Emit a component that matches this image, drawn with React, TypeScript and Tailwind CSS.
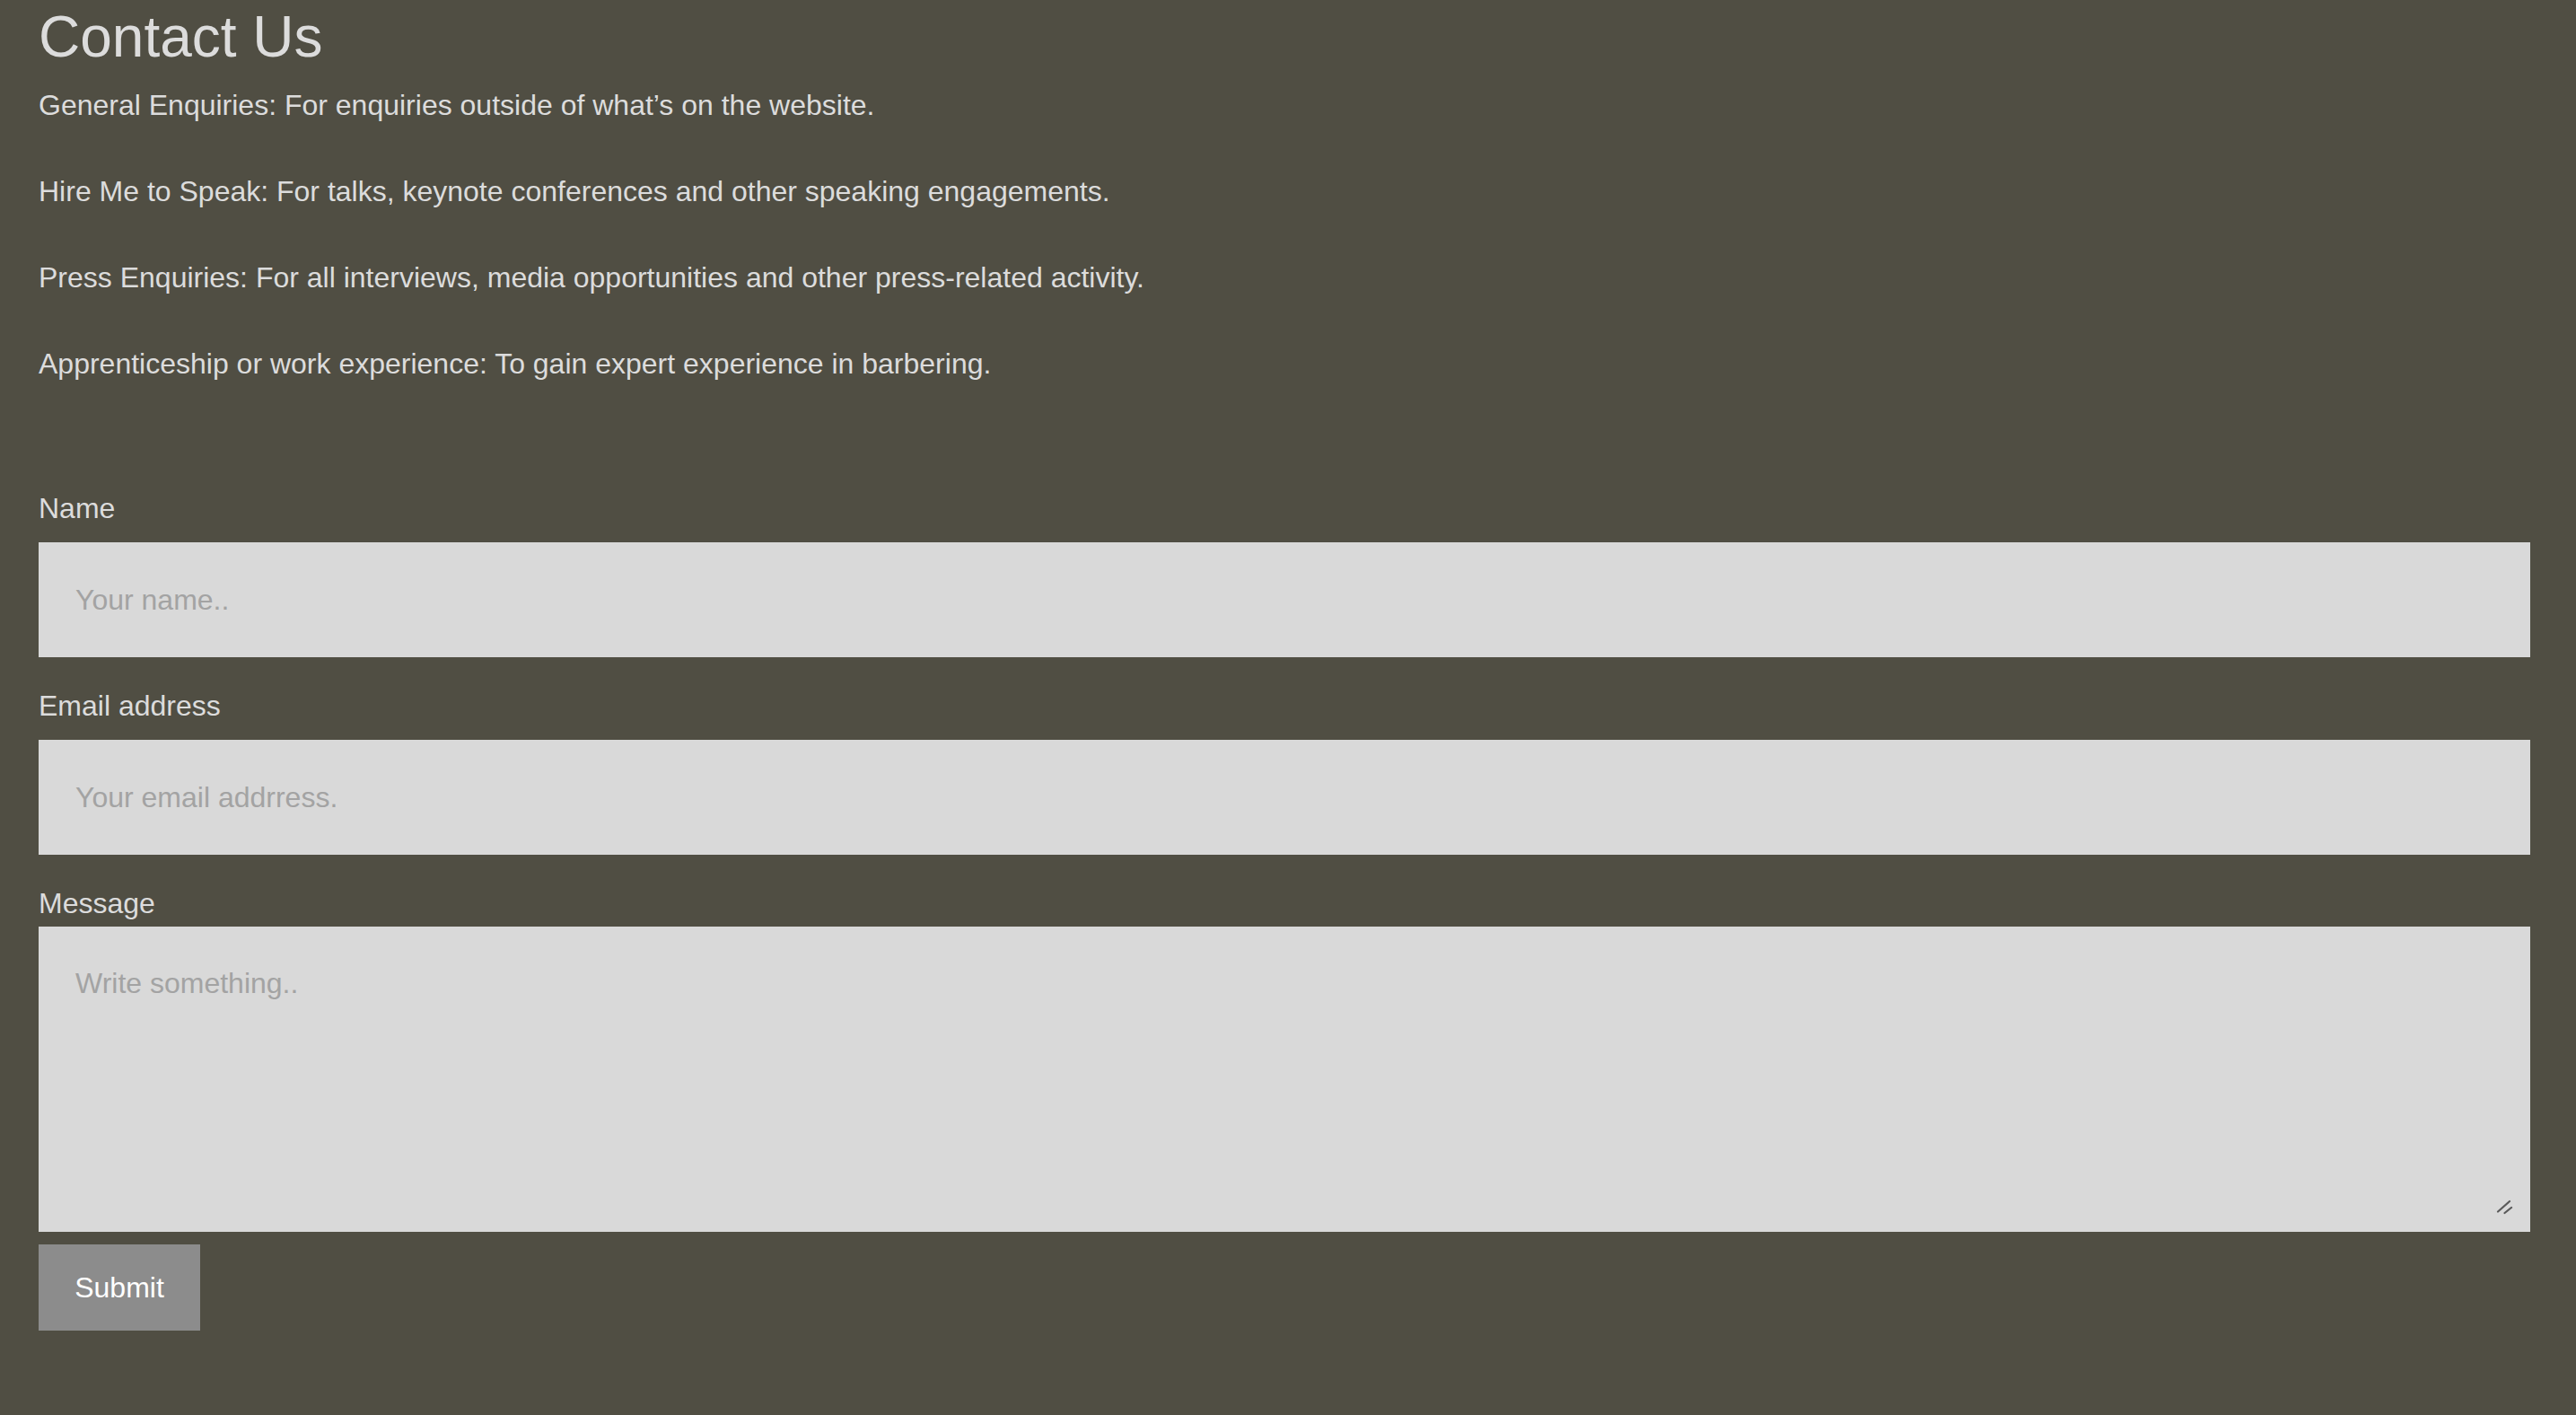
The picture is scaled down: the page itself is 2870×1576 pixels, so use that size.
const enquiries = [
  "General Enquiries: For enquiries outside of what’s on the website.",
  "Hire Me to Speak: For talks, keynote conferences and other speaking engagements.",
  "Press Enquiries: For all interviews, media opportunities and other press-related activity.",
  "Apprenticeship or work experience: To gain expert experience in barbering.",
];

const fieldClass =
  "block h-[128px] w-full bg-[#d9d9d9] px-[41px] text-[32px] leading-[37px] text-[#333333] outline-none placeholder:text-[#a3a3a3]";

export default function App() {
  return (
    <div className="min-h-screen bg-[#504e43] pl-[43px] pr-[51px] font-['Liberation_Sans',Arial,sans-serif] text-[#dcdcdc]">
      <h1 className="pt-[4px] text-[64px] leading-[74px] font-normal">Contact Us</h1>

      <div className="mt-[21px] flex flex-col gap-[59px]">
        {enquiries.map((line) => (
          <p key={line} className="text-[32px] leading-[37px]">
            {line}
          </p>
        ))}
      </div>

      <form
        className="mt-[124px] pb-[80px]"
        onSubmit={(event) => {
          event.preventDefault();
        }}
      >
        <label htmlFor="name" className="block text-[32px] leading-[37px]">
          Name
        </label>
        <input id="name" type="text" placeholder="Your name.." className={`mt-[19px] ${fieldClass}`} />

        <label htmlFor="email" className="mt-[36px] block text-[32px] leading-[37px]">
          Email address
        </label>
        <input id="email" type="email" placeholder="Your email addrress." className={`mt-[19px] ${fieldClass}`} />

        <label htmlFor="message" className="mt-[36px] block text-[32px] leading-[37px]">
          Message
        </label>
        <div className="relative mt-[7px]">
          <textarea
            id="message"
            placeholder="Write something.."
            className="block h-[340px] w-full resize-none bg-[#d9d9d9] px-[41px] pt-[45px] text-[32px] leading-[37px] text-[#333333] outline-none placeholder:text-[#a3a3a3]"
          />
          {/* resize grip */}
          <svg
            className="pointer-events-none absolute right-[19px] bottom-[19px] h-[18px] w-[20px]"
            viewBox="0 0 20 18"
            fill="none"
            stroke="#5a5a5a"
            strokeWidth="2.2"
            strokeLinecap="round"
          >
            <line x1="3" y1="14.5" x2="16" y2="3" />
            <line x1="10.5" y1="16" x2="18" y2="10" />
          </svg>
        </div>

        <button
          type="submit"
          className="mt-[14px] h-[96px] w-[180px] bg-[#8c8c8c] text-[32px] leading-[37px] text-white"
        >
          Submit
        </button>
      </form>
    </div>
  );
}
